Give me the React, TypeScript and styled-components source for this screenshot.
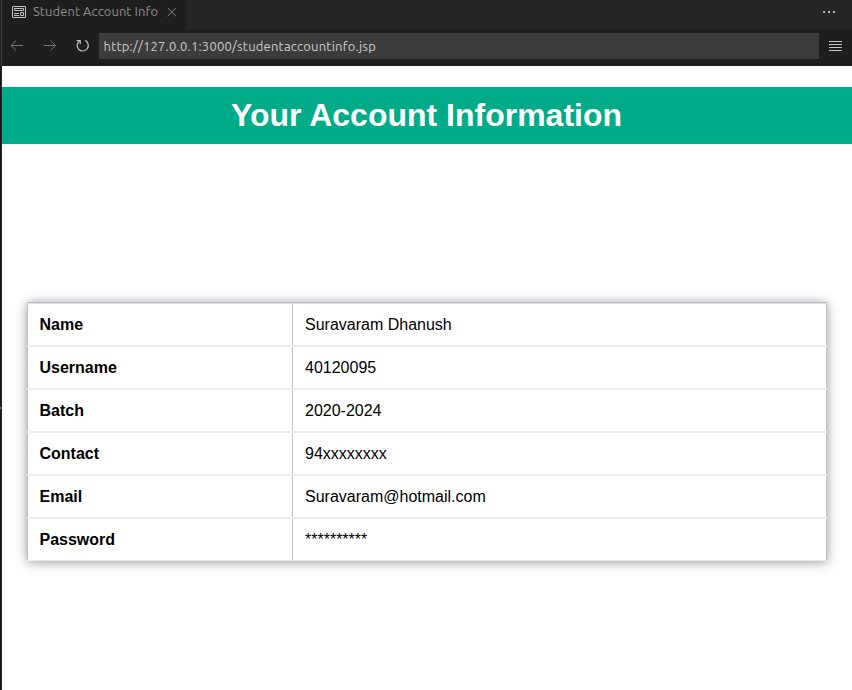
import React from "react";
import styled, { createGlobalStyle } from "styled-components";

const GlobalStyle = createGlobalStyle`
  * { box-sizing: border-box; }
  html, body { margin: 0; overflow: hidden; }
  body { background: #fff; font-family: "Liberation Sans", Arial, sans-serif; }
`;

const Window = styled.div`
  display: grid;
  grid-template-columns: 2px 1fr;
  width: 852px;
  height: 690px;
  overflow: hidden;
`;

const Sash = styled.div`
  display: flex;
  flex-direction: column;
  background: #17181b;
  border-right: 1px solid #252526;
`;

const SashTop = styled.div`
  width: 2px;
  height: 66px;
  background: linear-gradient(to right, #1c1c1c 1px, #424242 1px);
`;

const SashMark = styled.div`
  width: 1px;
  height: 2px;
  margin-top: 341px;
  background: #858585;
`;

const Pane = styled.div`
  display: flex;
  flex-direction: column;
  min-width: 0;
`;

const TabBar = styled.div`
  display: flex;
  height: 29px;
  background: #252526;
`;

const Tab = styled.div`
  display: flex;
  align-items: flex-start;
  width: 184px;
  padding: 5px 0 0 10px;
  background: #1e1e1e;
`;

const TabTitle = styled.span`
  width: 126px;
  margin: -3px 8px 0 6px;
  color: #8c8c8c;
  font: 13px/19px Ubuntu, "Noto Sans", sans-serif;
  letter-spacing: 0.06px;
  white-space: nowrap;
`;

const TabActions = styled.div`
  display: flex;
  align-items: flex-start;
  margin-left: auto;
  padding: 11px 17px 0 0;
`;

const Toolbar = styled.div`
  display: flex;
  align-items: flex-start;
  height: 37px;
  padding: 4px 10px 0 8px;
  background: #1e1e1e;
`;

const NavButtons = styled.div`
  display: flex;
  align-items: center;
  gap: 19px;
  width: 89px;
  height: 26px;
`;

const Address = styled.div`
  width: 720px;
  height: 26px;
  padding-left: 4.5px;
  background: #3c3c3c;
  color: #cccccc;
  font: 13px/26px Ubuntu, "Noto Sans", sans-serif;
  letter-spacing: 0.21px;
  white-space: nowrap;
`;

const MenuIcon = styled.svg`
  margin: 8px 0 0 10px;
`;

const Page = styled.main`
  flex: 1;
  padding-top: 21px;
  background: #fff;
`;

const Title = styled.h1`
  height: 57px;
  margin: 0;
  padding-right: 1px;
  background: #00ab87;
  color: #fff;
  font-size: 32px;
  font-weight: 700;
  line-height: 56px;
  text-align: center;
`;

const Account = styled.dl`
  width: 800px;
  height: 259px;
  margin: 158px 0 0 25px;
  border-top: 1px solid #b8bcbe;
  box-shadow: 0 2px 12px rgba(32, 32, 32, 0.3), 0 0 8px rgba(0, 0, 0, 0.16);
  background: #fff;
`;

const Row = styled.div`
  display: grid;
  grid-template-columns: 266px 1fr;
  height: 43px;
  border-bottom: 2px solid #ececec;
  &:first-child {
    height: 44px;
    border-top: 1px solid #dee2e6;
  }
  &:last-child {
    height: 42px;
    border-bottom-width: 1px;
  }
`;

const Label = styled.dt`
  padding-left: 11.5px;
  border-left: 1px solid #bdbdbd;
  border-right: 1px solid #bdbfc1;
  color: #000;
  font-size: 16px;
  font-weight: 700;
  line-height: 41px;
`;

const Value = styled.dd`
  margin: 0;
  padding-left: 12px;
  border-right: 1px solid #bcc3c7;
  color: #000;
  font-size: 16px;
  line-height: 41px;
`;

const details = [
  ["Name", "Suravaram Dhanush"],
  ["Username", "40120095"],
  ["Batch", "2020-2024"],
  ["Contact", "94xxxxxxxx"],
  ["Email", "Suravaram@hotmail.com"],
  ["Password", "**********"],
];

function PreviewIcon() {
  return (
    <svg width="15" height="14" viewBox="0 0 15 14" fill="none" stroke="#c5c5c5">
      <rect x="0.5" y="1.5" width="13" height="11" rx="0.5" />
      <path d="M2.5 3.5h9v2h-9zM2 8.5h5M2 10.5h5M8.5 7.5h3v3h-3z" />
    </svg>
  );
}

function CloseIcon() {
  return (
    <svg width="10" height="14" viewBox="0 0 10 14" fill="none" stroke="#858585">
      <path d="M.7 3l8.2 8.2M8.9 3L.7 11.2" />
    </svg>
  );
}

function ArrowIcon({ forward = false }: { forward?: boolean }) {
  return (
    <svg width="14" height="12" viewBox="0 0 14 12" fill="none" stroke="#777777">
      {forward ? <path d="M.5 5.5h12M7.5.7l5 4.8-5 4.8" /> : <path d="M13 5.5H1M6 .7L1 5.5l5 4.8" />}
    </svg>
  );
}

function ReloadIcon() {
  return (
    <svg width="14" height="14" viewBox="0 0 14 14" fill="none" stroke="#c5c5c5" strokeWidth="1.2">
      <path d="M9.2 1.4A5.6 5.6 0 1 1 3.7 1.7M.6 1.5h3.6v3.7" />
    </svg>
  );
}

export default function App() {
  return (
    <>
      <GlobalStyle />
      <Window>
        <Sash><SashTop /><SashMark /></Sash>
        <Pane>
          <TabBar>
            <Tab>
              <PreviewIcon />
              <TabTitle>Student Account Info</TabTitle>
              <CloseIcon />
            </Tab>
            <TabActions>
              <svg width="12" height="2" viewBox="0 0 12 2" fill="#b5b5b5">
                <path d="M0 0h2v2H0zM5 0h2v2H5zM10 0h2v2h-2z" />
              </svg>
            </TabActions>
          </TabBar>
          <Toolbar>
            <NavButtons>
              <ArrowIcon />
              <ArrowIcon forward />
              <ReloadIcon />
            </NavButtons>
            <Address>http://127.0.0.1:3000/studentaccountinfo.jsp</Address>
            <MenuIcon width="13" height="12" viewBox="0 0 13 12" stroke="#c5c5c5">
              <path d="M0 .5h13M0 3.5h13M0 6.5h13M0 9.5h13" />
            </MenuIcon>
          </Toolbar>
          <Page>
            <Title>Your Account Information</Title>
            <Account>
              {details.map(([label, value]) => (
                <Row key={label}>
                  <Label>{label}</Label>
                  <Value>{value}</Value>
                </Row>
              ))}
            </Account>
          </Page>
        </Pane>
      </Window>
    </>
  );
}
